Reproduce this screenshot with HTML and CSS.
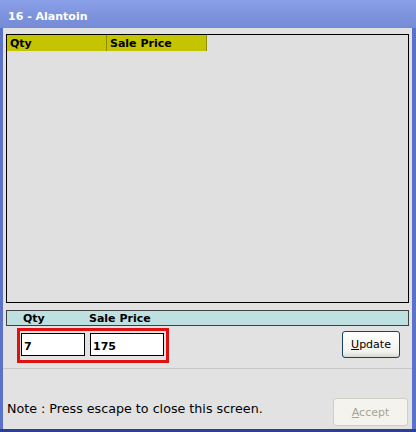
FILE: index.html
```html
<!DOCTYPE html>
<html lang="en">
<head>
    <meta charset="UTF-8">
    <title>16 - Alantoin</title>
    <link rel="stylesheet" href="styles.css">
</head>
<body>
    <div class="window">
        <div class="titlebar">16 - Alantoin</div>
        <div class="content">
            <div class="grid">
                <div class="grid-head">
                    <div class="col col-qty">Qty</div>
                    <div class="col col-price">Sale Price</div>
                </div>
            </div>

            <div class="edit-bar">
                <span class="lbl lbl-qty">Qty</span>
                <span class="lbl lbl-price">Sale Price</span>
            </div>

            <div class="edit-row">
                <div class="highlight">
                    <input type="text" class="field field-qty" value="7">
                    <input type="text" class="field field-price" value="175">
                </div>
                <button class="btn btn-update"><u>U</u>pdate</button>
            </div>

            <div class="footer">
                <p class="note">Note : Press escape to close this screen.</p>
                <button class="btn btn-accept" disabled><u>A</u>ccept</button>
            </div>
        </div>
    </div>
</body>
</html>
```

FILE: styles.css
```css
* {
    margin: 0;
    padding: 0;
    box-sizing: border-box;
}

body {
    background: #0a246a;
    font-family: 'DejaVu Sans', Verdana, sans-serif;
}

.window {
    width: 416px;
    height: 432px;
    display: flex;
    flex-direction: column;
    background: #5a72c9;
    border-bottom: 3px solid #2b3f94;
}

.titlebar {
    height: 28px;
    padding: 10px 0 0 8px;
    color: #fff;
    font-size: 11px;
    font-weight: bold;
    background: linear-gradient(to bottom, #8aa0e8, #7d92dc 60%, #768bd6);
}

.content {
    flex: 1;
    margin: 0 4px 0 3px;
    background: #e2e2e2;
    padding: 6px 3px 0 3px;
    display: flex;
    flex-direction: column;
}

.grid {
    height: 269px;
    border: 1px solid #000;
    background: #e0e0e0;
}

.grid-head {
    display: flex;
    height: 16px;
}

.col {
    background: #c4c400;
    font-size: 11px;
    font-weight: bold;
    color: #000;
    padding: 2px 0 0 3px;
    border-right: 1px solid #8c8c00;
}

.col-qty {
    width: 100px;
}

.col-price {
    width: 100px;
}

.edit-bar {
    margin-top: 7px;
    height: 16px;
    border: 1px solid #404040;
    background: #bfe0e0;
    position: relative;
    font-size: 11px;
    font-weight: bold;
}

.lbl {
    position: absolute;
    top: 1px;
}

.lbl-qty {
    left: 16px;
}

.lbl-price {
    left: 82px;
}

.edit-row {
    display: flex;
    align-items: flex-start;
    justify-content: space-between;
    height: 42px;
}

.highlight {
    margin: 2px 0 0 11px;
    width: 152px;
    height: 35px;
    border: 3px solid #e01010;
    display: flex;
    gap: 5px;
    padding: 2px 0 0 1px;
}

.field {
    height: 23px;
    border: 1px solid #000;
    background: #fff;
    font-family: 'DejaVu Sans', Verdana, sans-serif;
    font-size: 11px;
    font-weight: bold;
    padding: 3px 2px 0;
    outline: none;
}

.field-qty {
    width: 64px;
}

.field-price {
    width: 74px;
}

.btn {
    font-family: 'DejaVu Sans', Tahoma, sans-serif;
    font-size: 11px;
    border-radius: 3px;
    background: linear-gradient(to bottom, #ffffff, #f2f2ee 80%, #d8d8d0);
    color: #000;
}

.btn-update {
    margin: 5px 9px 0 0;
    width: 58px;
    height: 27px;
    border: 1px solid #1c3e6e;
}

.footer {
    border-top: 1px solid #c8c8c8;
    flex: 1;
    display: flex;
    align-items: flex-start;
    justify-content: space-between;
    margin: 0 -3px 0 -3px;
}

.note {
    font-size: 12.7px;
    color: #000;
    padding: 32px 0 0 4px;
}

.btn-accept {
    margin: 29px 4px 0 0;
    width: 75px;
    height: 28px;
    border: 1px solid #cfcfc4;
    background: #f4f3ee;
    color: #a4a394;
}
```
